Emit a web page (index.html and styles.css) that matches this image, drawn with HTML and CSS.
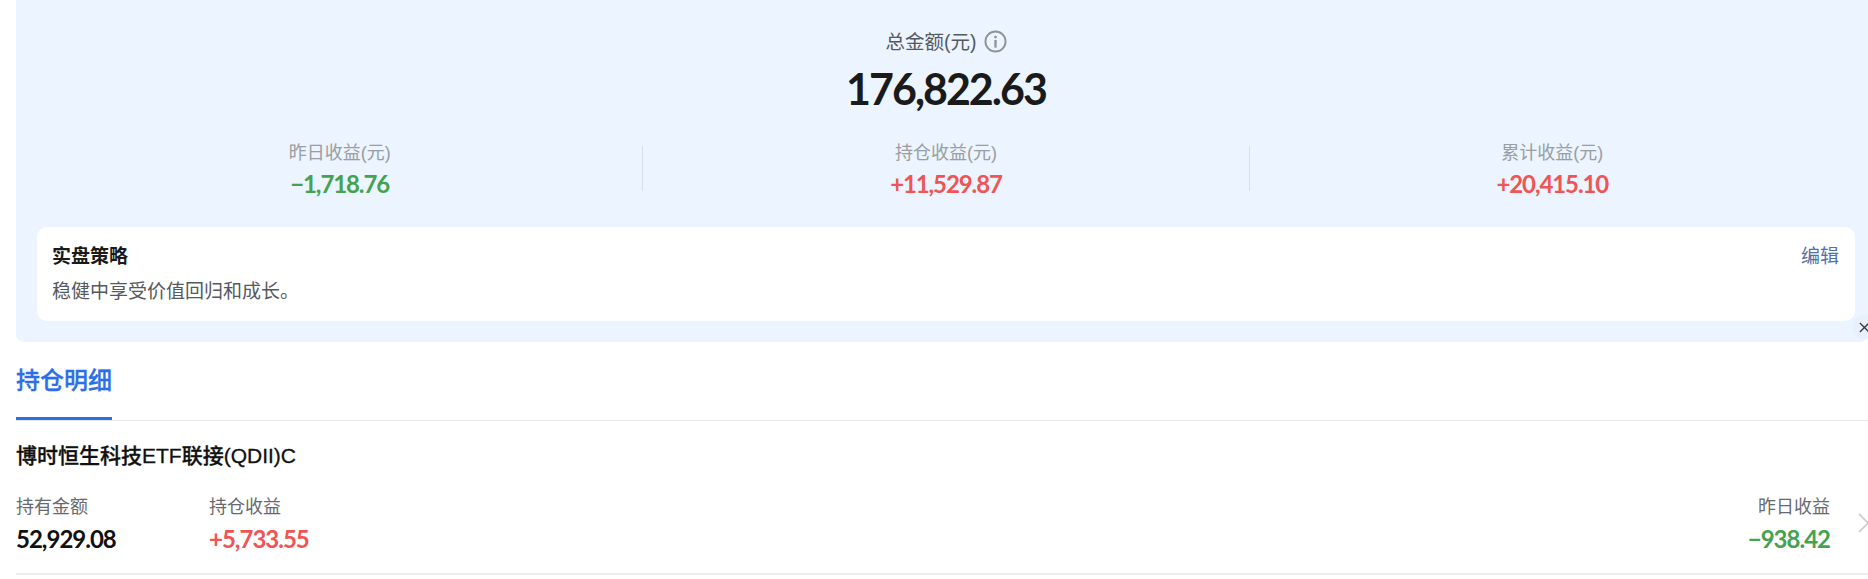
FILE: index.html
```html
<!DOCTYPE html>
<html lang="zh-CN">
<head>
    <meta charset="UTF-8">
    <title>持仓明细</title>
    <link rel="stylesheet" href="styles.css">
</head>
<body>

    <div class="summary">
        <div class="total-label">
            <span>总金额(元)</span>
            <svg class="info-icon" viewBox="0 0 24 24" xmlns="http://www.w3.org/2000/svg">
                <circle cx="12" cy="12" r="10.5" fill="none" stroke="#8f9396" stroke-width="2"/>
                <circle cx="12" cy="7.4" r="1.5" fill="#8f9396"/>
                <rect x="10.8" y="10.4" width="2.4" height="8" fill="#8f9396"/>
            </svg>
        </div>
        <div class="total-value">176,822.63</div>

        <div class="stats">
            <div class="stat">
                <div class="stat-label">昨日收益(元)</div>
                <div class="stat-value down">−1,718.76</div>
            </div>
            <div class="stat">
                <div class="stat-label">持仓收益(元)</div>
                <div class="stat-value up">+11,529.87</div>
            </div>
            <div class="stat">
                <div class="stat-label">累计收益(元)</div>
                <div class="stat-value up">+20,415.10</div>
            </div>
        </div>

        <div class="strategy">
            <div class="strategy-head">
                <span class="strategy-title">实盘策略</span>
                <span class="strategy-edit">编辑</span>
            </div>
            <div class="strategy-text">稳健中享受价值回归和成长。</div>
        </div>

        <div class="close-btn">
            <svg viewBox="0 0 12 12" xmlns="http://www.w3.org/2000/svg">
                <path d="M1 1 L11 11 M11 1 L1 11" stroke="#3a3d40" stroke-width="1.5" fill="none"/>
            </svg>
        </div>
    </div>

    <div class="tabs">
        <div class="tab active">持仓明细</div>
    </div>

    <div class="fund">
        <div class="fund-name">博时恒生科技ETF联接(QDII)C</div>
        <div class="fund-row">
            <div class="cell cell-amount">
                <div class="cell-label">持有金额</div>
                <div class="cell-value">52,929.08</div>
            </div>
            <div class="cell">
                <div class="cell-label">持仓收益</div>
                <div class="cell-value up">+5,733.55</div>
            </div>
            <div class="cell cell-right">
                <div class="cell-label">昨日收益</div>
                <div class="cell-value down">−938.42</div>
            </div>
        </div>
        <svg class="arrow" viewBox="0 0 12 22" xmlns="http://www.w3.org/2000/svg">
            <path d="M1 1 L11 11 L1 21" stroke="#c9cccf" stroke-width="1.8" fill="none"/>
        </svg>
    </div>

</body>
</html>
```

FILE: styles.css
```css
body {
    margin: 0;
    padding-left: 16px;
    background-color: #fff;
    font-family: "Liberation Sans", "Noto Sans CJK SC", sans-serif;
    overflow: hidden;
}
.summary {
    position: relative;
    height: 342px;
    box-sizing: border-box;
    padding-top: 26px;
    padding-left: 21px;
    padding-right: 13px;
    background-color: #ebf4ff;
    border-radius: 0 0 8px 8px;
    text-align: center;
}
.total-label {
    display: flex;
    justify-content: center;
    align-items: center;
    gap: 7px;
    height: 28px;
    font-size: 19.5px;
    color: #55595e;
}
.info-icon {
    width: 23px;
    height: 23px;
    margin-top: 2px;
}
.total-value {
    margin-top: 7px;
    font-family: "Lato", sans-serif;
    font-size: 43px;
    line-height: 56px;
    font-weight: 700;
    letter-spacing: -2px;
    color: #1a1a1a;
}
.stats {
    display: flex;
    margin-top: 29px;
    height: 45px;
}
.stat {
    flex: 1;
    border-right: 1px solid #d8dfe6;
}
.stat:last-child {
    border-right: none;
}
.stat-label {
    margin-top: -4px;
    font-size: 18px;
    line-height: 22px;
    color: #9a9da1;
}
.stat-value {
    margin-top: 5px;
    font-family: "Lato", sans-serif;
    font-size: 24px;
    line-height: 30px;
    font-weight: 700;
    letter-spacing: -1.1px;
}
.strategy {
    margin-top: 36px;
    height: 94px;
    box-sizing: border-box;
    padding: 17px 16px 16px 15px;
    background-color: #fff;
    border-radius: 10px;
    text-align: left;
}
.strategy-head {
    display: flex;
    justify-content: space-between;
    line-height: 26px;
}
.strategy-title {
    font-size: 19px;
    font-weight: 700;
    color: #1a1a1a;
}
.strategy-edit {
    font-size: 19px;
    color: #5470a8;
}
.strategy-text {
    margin-top: 9px;
    font-size: 19px;
    line-height: 26px;
    color: #55595e;
}
.close-btn {
    position: absolute;
    right: -8px;
    top: 315px;
    width: 24px;
    height: 24px;
    border-radius: 50%;
    background-color: #e6f1fd;
    display: flex;
    align-items: center;
    justify-content: center;
}
.close-btn svg {
    width: 11px;
    height: 11px;
}
.tabs {
    height: 78px;
    border-bottom: 1px solid #e8e8e8;
}
.tab {
    display: inline-block;
    box-sizing: border-box;
    height: 78px;
    font-size: 24px;
    line-height: 78px;
    font-weight: 500;
    -webkit-text-stroke: 0.3px #2b6fe8;
    color: #2b6fe8;
    border-bottom: 3px solid #2b6fe8;
}
.fund {
    position: relative;
    height: 154px;
    box-sizing: border-box;
    padding-top: 21px;
    padding-right: 38px;
    border-bottom: 2px solid #ececec;
}
.fund-name {
    font-size: 21px;
    line-height: 28px;
    font-weight: 500;
    -webkit-text-stroke: 0.3px #111;
    color: #111;
}
.fund-row {
    display: flex;
    margin-top: 25px;
}
.cell-amount {
    width: 193px;
}
.cell-right {
    margin-left: auto;
    text-align: right;
}
.cell-label {
    font-size: 18px;
    line-height: 24px;
    color: #666a6e;
}
.cell-value {
    margin-top: 5px;
    font-family: "Lato", sans-serif;
    font-size: 24px;
    line-height: 30px;
    font-weight: 700;
    letter-spacing: -1px;
    color: #111;
}
.up {
    color: #f05454;
}
.down {
    color: #45a24f;
}
.arrow {
    position: absolute;
    right: -1px;
    top: 92px;
    width: 11px;
    height: 20px;
}
```
